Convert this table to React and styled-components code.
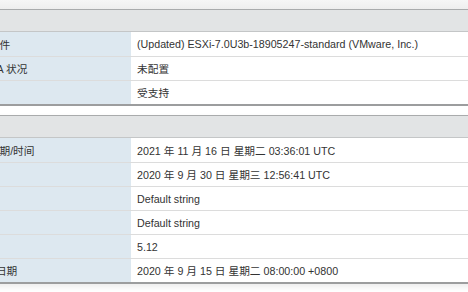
import React from "react";
import styled, { createGlobalStyle } from "styled-components";

const Global = createGlobalStyle`
  html, body { margin: 0; padding: 0; background: #ffffff; overflow: hidden; }
  body { font-family: "Liberation Sans", "Noto Sans CJK SC", Arial, sans-serif; }
  #root { width: 468px; height: 292px; overflow: hidden; }
`;

const Page = styled.div`
  width: 468px;
  height: 292px;
  overflow: hidden;
  background: #ffffff;
  display: flex;
  flex-direction: column;
`;

const TopShade = styled.div`
  height: 9px;
  flex: none;
  background: linear-gradient(#f6f6f6, #eeeeee);
`;

const Sheet = styled.div`
  margin-left: -70px;
  width: 620px;
  display: flex;
  flex-direction: column;
  gap: 9px;
`;

const Section = styled.section`
  border-top: 1px solid #a9abac;
  border-bottom: 2px solid #9c9d9e;
  box-shadow: ${(p) => (p.$last ? "0 3px 6px rgba(0,0,0,0.08)" : "none")};
`;

const Header = styled.div`
  height: 21px;
  background: #e2e4e5;
  border-bottom: 1px solid #c4c6c7;
`;

const Row = styled.div`
  display: grid;
  grid-template-columns: 201px 1fr;
  height: 24px;
  border-top: ${(p) => (p.$first ? "none" : "1px solid #dcdcdc")};
  box-sizing: border-box;
`;

const Label = styled.div`
  background: #dde8f0;
  color: #333333;
  font-size: 10.7px;
  display: flex;
  align-items: center;
  padding-left: 16px;
  white-space: nowrap;
`;

const Value = styled.div`
  background: #ffffff;
  color: #333333;
  font-size: 10.7px;
  display: flex;
  align-items: center;
  padding-left: 6px;
  white-space: nowrap;
`;

const general = [
  ["映像配置文件", "(Updated) ESXi-7.0U3b-18905247-standard (VMware, Inc.)"],
  ["vSphere HA 状况", "未配置"],
  ["vMotion", "受支持"],
];

const system = [
  ["主机上的日期/时间", "2021 年 11 月 16 日 星期二 03:36:01 UTC"],
  ["安装日期", "2020 年 9 月 30 日 星期三 12:56:41 UTC"],
  ["资产标记", "Default string"],
  ["序列号", "Default string"],
  ["BIOS 版本", "5.12"],
  ["BIOS 发布日期", "2020 年 9 月 15 日 星期二 08:00:00 +0800"],
];

function Table({ rows, last }) {
  return (
    <Section $last={last}>
      <Header />
      {rows.map(([k, v], i) => (
        <Row key={k} $first={i === 0}>
          <Label>{k}</Label>
          <Value>{v}</Value>
        </Row>
      ))}
    </Section>
  );
}

export default function App() {
  return (
    <Page>
      <Global />
      <TopShade />
      <Sheet>
        <Table rows={general} />
        <Table rows={system} last />
      </Sheet>
    </Page>
  );
}
